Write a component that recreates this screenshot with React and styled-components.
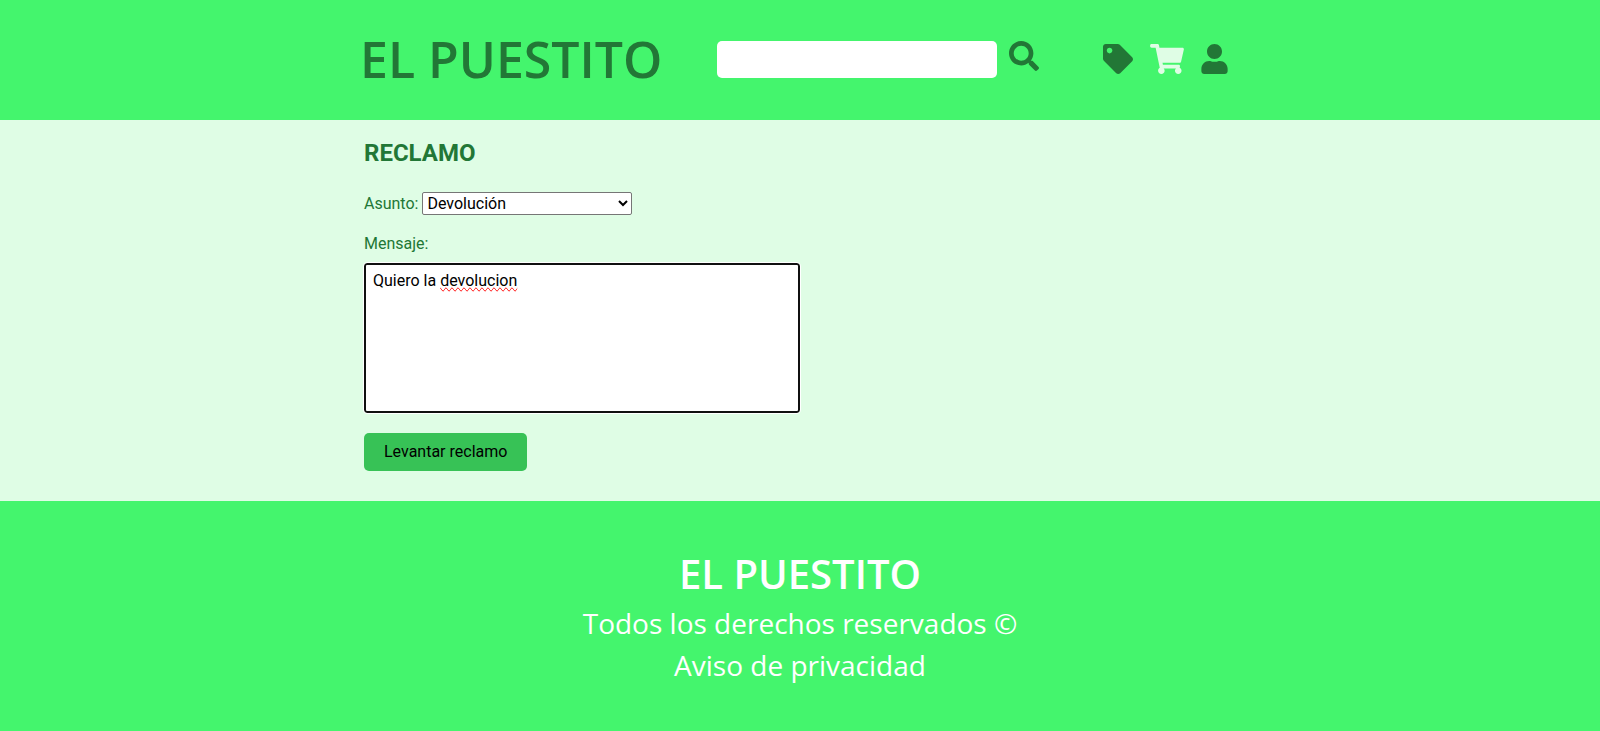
import React, { useState } from "react";
import styled, { createGlobalStyle } from "styled-components";
import { FaSearch, FaTag, FaShoppingCart, FaUser } from "react-icons/fa";

const colors = {
  bright: "#44f56d",
  pale: "#dffde5",
  dark: "#227736",
  button: "#37c256",
};

const GlobalStyle = createGlobalStyle`
  *, *::before, *::after { box-sizing: border-box; }
  body {
    margin: 0;
    background: ${colors.bright};
    color: ${colors.dark};
    font-family: Roboto, sans-serif;
    font-size: 16px;
    line-height: 19px;
  }
`;

const Container = styled.div`
  width: 100%;
  max-width: 912px;
  margin: 0 auto;
  padding: 0 20px;
`;

const Header = styled.header`
  background: ${colors.bright};
`;

const HeaderBar = styled(Container)`
  display: flex;
  flex-wrap: wrap;
  align-items: center;
  column-gap: 55px;
  max-width: 920px;
  min-height: 120px;
  padding: 0 32px 2px 20px;
`;

const Brand = styled.a`
  color: ${colors.dark};
  font-family: "Open Sans", sans-serif;
  font-size: 50px;
  font-weight: 600;
  line-height: 60px;
  text-decoration: none;
`;

const SearchForm = styled.form`
  display: flex;
  align-items: flex-start;
  gap: 12px;
`;

const SearchInput = styled.input`
  width: 280px;
  height: 37px;
  padding: 0 10px;
  border: 0;
  border-radius: 5px;
  background: white;
  font: inherit;
`;

const IconButton = styled.button`
  display: flex;
  padding: 0;
  border: 0;
  background: none;
  color: ${colors.dark};
  font-size: 30px;
  cursor: pointer;
`;

const Nav = styled.nav`
  display: flex;
  gap: 17px;
  margin-left: auto;
`;

const NavLink = styled.a`
  display: flex;
  color: ${({ $active }) => ($active ? colors.pale : colors.dark)};

  svg {
    width: ${({ $width }) => $width}px;
    height: 30px;
  }
`;

const Main = styled.main`
  background: ${colors.pale};
`;

const ClaimForm = styled(Container)`
  display: flex;
  flex-direction: column;
  align-items: flex-start;
  gap: 20px;
  padding-top: 20px;
  padding-bottom: 30px;
`;

const Title = styled.h1`
  margin: 0 0 6px;
  font-size: 24px;
  font-weight: 700;
  line-height: 26px;
`;

const InlineField = styled.div`
  display: flex;
  align-items: center;
  gap: 4px;
`;

const Select = styled.select`
  width: 210px;
  height: 23px;
  color: black;
  background: white;
  border: 1px solid #767676;
  border-radius: 2px;
  font: inherit;
`;

const StackedField = styled.div`
  display: flex;
  flex-direction: column;
  gap: 10px;
  width: 100%;
  max-width: 436px;
`;

const FieldLabel = styled.label`
  line-height: 18px;
`;

const Editor = styled.div`
  position: relative;
  display: flex;
  height: 150px;
`;

const TextArea = styled.textarea`
  width: 100%;
  height: 100%;
  padding: 6px 7px;
  border: 2px solid #101010;
  border-radius: 3px;
  outline: 1px solid white;
  background: white;
  color: black;
  font: inherit;
  resize: none;
`;

const SpellingLayer = styled.div`
  position: absolute;
  inset: 0;
  padding: 8px 9px;
  color: transparent;
  white-space: pre-wrap;
  pointer-events: none;
`;

const Misspelled = styled.span`
  text-decoration: underline wavy red 1px;
  text-decoration-skip-ink: none;
  text-underline-offset: 1px;
  text-decoration-line: spelling-error;
`;

const SubmitButton = styled.button`
  height: 38px;
  padding: 0 20px 1px;
  border: 0;
  border-radius: 5px;
  background: ${colors.button};
  color: black;
  font: inherit;
  cursor: pointer;
`;

const Footer = styled.footer`
  padding: 45px 20px;
  background: ${colors.bright};
  color: white;
  font-family: "Open Sans", sans-serif;
  font-size: 28px;
  line-height: 42px;
  text-align: center;
`;

const FooterTitle = styled.h2`
  margin: 0;
  font-size: 40px;
  font-weight: 600;
  line-height: 56px;
`;

const FooterText = styled.p`
  margin: 0;
`;

const FooterLink = styled.a`
  color: inherit;
  text-decoration: none;
`;

const unknownWords = ["devolucion"];

function SpellCheck({ text }) {
  return (
    <SpellingLayer aria-hidden="true">
      {text.split(/(\s+)/).map((word, i) =>
        unknownWords.includes(word) ? <Misspelled key={i}>{word}</Misspelled> : word
      )}
    </SpellingLayer>
  );
}

export default function App() {
  const [message, setMessage] = useState("Quiero la devolucion");

  return (
    <>
      <GlobalStyle />
      <Header>
        <HeaderBar>
          <Brand href="#">EL PUESTITO</Brand>
          <SearchForm role="search" onSubmit={(e) => e.preventDefault()}>
            <SearchInput type="text" aria-label="Buscar productos" />
            <IconButton type="submit" aria-label="Buscar">
              <FaSearch />
            </IconButton>
          </SearchForm>
          <Nav>
            <NavLink href="#" aria-label="Ofertas" $width={30}><FaTag /></NavLink>
            <NavLink href="#" aria-label="Carrito" $width={34} $active><FaShoppingCart /></NavLink>
            <NavLink href="#" aria-label="Cuenta" $width={27}><FaUser /></NavLink>
          </Nav>
        </HeaderBar>
      </Header>
      <Main>
        <ClaimForm as="form" onSubmit={(e) => e.preventDefault()}>
          <Title>RECLAMO</Title>
          <InlineField>
            <label htmlFor="asunto">Asunto:</label>
            <Select id="asunto" defaultValue="devolucion">
              <option value="devolucion">Devolución</option>
            </Select>
          </InlineField>
          <StackedField>
            <FieldLabel htmlFor="mensaje">Mensaje:</FieldLabel>
            <Editor>
              <TextArea
                id="mensaje"
                spellCheck={false}
                value={message}
                onChange={(e) => setMessage(e.target.value)}
              />
              <SpellCheck text={message} />
            </Editor>
          </StackedField>
          <SubmitButton type="submit">Levantar reclamo</SubmitButton>
        </ClaimForm>
      </Main>
      <Footer>
        <FooterTitle>EL PUESTITO</FooterTitle>
        <FooterText>Todos los derechos reservados ©</FooterText>
        <FooterText>
          <FooterLink href="#">Aviso de privacidad</FooterLink>
        </FooterText>
      </Footer>
    </>
  );
}
